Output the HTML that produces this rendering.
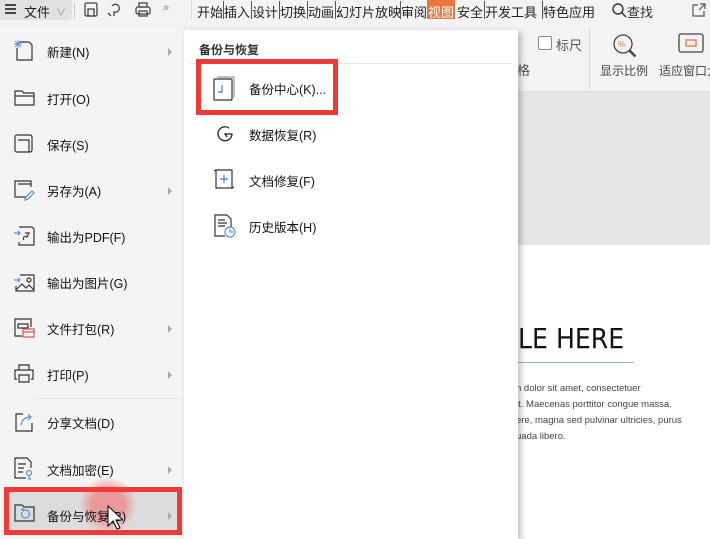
<!DOCTYPE html>
<html><head><meta charset="utf-8"><style>
*{margin:0;padding:0;box-sizing:border-box}
body{width:710px;height:539px;overflow:hidden;position:relative;background:#e6e6e6;font-family:"Liberation Sans","Noto Sans CJK SC",sans-serif;font-size:12px;color:#222}
.abs{position:absolute}
.top{left:0;top:0;width:710px;height:22px;background:#f3f3f3}
.ribbon{left:0;top:22px;width:710px;height:70px;background:#f3f3f3;border-bottom:1px solid #e0e0e0}
.tab{position:absolute;top:2px;font-size:13px;color:#222;white-space:nowrap}
.sep{position:absolute;top:1px;width:1px;height:18px;background:#555}
.slide{left:518px;top:245px;width:192px;height:294px;background:#fff}
.left{left:0;top:26px;width:184px;height:513px;background:#f4f4f4;box-shadow:1px 0 2px rgba(0,0,0,.08)}
.sub{left:184px;top:30px;width:334px;height:509px;background:#fff;box-shadow:3px 2px 6px rgba(0,0,0,.25)}
.item{position:absolute;left:47px;font-size:12.5px;color:#111;white-space:nowrap;margin-top:-2px}
.arr{position:absolute;left:168px;width:0;height:0;border-left:4px solid #aaa;border-top:4px solid transparent;border-bottom:4px solid transparent}
svg{position:absolute}
.red{position:absolute;border:5px solid #f03a3a}
.si{position:absolute;left:249px;font-size:12.5px;color:#111;margin-top:-2px}
</style></head><body>
<div class="abs top"></div>
<div class="abs" style="left:0;top:0;width:72px;height:20px;background:#e2e2e2;border-radius:0 0 4px 0"></div>
<div class="abs" style="left:5px;top:4px;width:11px;height:1.5px;background:#444;box-shadow:0 4px 0 #444,0 8px 0 #444"></div>
<div class="tab" style="left:24px">文件</div>
<div class="tab" style="left:56px;color:#888;font-size:10px;top:4px">∨</div>
<div class="abs" style="left:74px;top:2px;width:1px;height:16px;background:#ccc"></div>
<svg style="left:84px;top:2px" width="70" height="16" fill="none" stroke="#444" stroke-width="1.3"><rect x="1" y="1" width="12" height="13" rx="1.5"/><rect x="4" y="7" width="6" height="7"/><path d="M28 4a4 4 0 1 1 2 6v4M24 11l3 3"/><rect x="52" y="5" width="14" height="7" rx="2"/><rect x="55" y="1" width="8" height="4"/><rect x="55" y="9" width="8" height="5"/></svg>
<div class="tab" style="left:163px;color:#888;font-size:11px">»</div>
<div class="abs" style="left:191px;top:0;width:1px;height:20px;background:#ddd"></div>
<div class="tab" style="left:197px">开始</div><div class="sep" style="left:223px"></div><div class="tab" style="left:224px">插入</div><div class="sep" style="left:251px"></div><div class="tab" style="left:252px">设计</div><div class="sep" style="left:279px"></div><div class="tab" style="left:280px">切换</div><div class="sep" style="left:307px"></div><div class="tab" style="left:308px">动画</div><div class="sep" style="left:335px"></div><div class="tab" style="left:336px">幻灯片放映</div><div class="sep" style="left:400px"></div><div class="tab" style="left:401px">审阅</div>
<div class="abs" style="left:427px;top:0;width:28px;height:19px;background:#e8763f"></div>
<div class="tab" style="left:428px;color:#fff">视图</div><div class="tab" style="left:457px">安全</div><div class="sep" style="left:484px"></div><div class="tab" style="left:485px">开发工具</div><div class="sep" style="left:542px"></div><div class="tab" style="left:543px">特色应用</div>
<svg style="left:611px;top:2px" width="16" height="16" fill="none" stroke="#333" stroke-width="1.4"><circle cx="7" cy="7" r="5"/><path d="M11 11l4 4"/></svg>
<div class="tab" style="left:627px;color:#333">查找</div>
<svg style="left:691px;top:2px" width="16" height="16" fill="none" stroke="#555" stroke-width="1.2"><path d="M7 3H2v11h11V9M9 2h5v5M14 2L8 8"/></svg>
<div class="abs ribbon"></div>
<div class="abs" style="left:538px;top:36px;width:14px;height:14px;border:1px solid #888;border-radius:2px;background:#fff"></div>
<div class="abs" style="left:556px;top:35px;font-size:13px;color:#555">标尺</div>
<div class="abs" style="left:517px;top:60px;font-size:13px;color:#555">格</div>
<div class="abs" style="left:589px;top:28px;width:1px;height:62px;background:#ddd"></div>
<svg style="left:612px;top:33px" width="26" height="26" fill="none" stroke="#444" stroke-width="1.3"><circle cx="11" cy="11" r="9"/><path d="M17.5 17.5l6 6" stroke-width="2.5"/><text x="6" y="14" font-size="8" fill="#e8763f" stroke="none" font-family="Liberation Sans">%</text></svg>
<div class="abs" style="left:600px;top:62px;font-size:12px;color:#444">显示比例</div>
<svg style="left:678px;top:33px" width="32" height="22" fill="none" stroke="#444" stroke-width="1.3"><rect x="1" y="1" width="24" height="18" rx="2"/><rect x="8" y="7" width="10" height="6" stroke="#e8763f"/></svg>
<div class="abs" style="left:659px;top:62px;font-size:12px;color:#444;white-space:nowrap">适应窗口大</div>
<div class="abs slide"></div>
<div class="abs" style="left:518px;top:322px;font-size:28px;color:#111;font-family:'DejaVu Sans Condensed','Liberation Sans',sans-serif;white-space:nowrap">LE HERE</div>
<div class="abs" style="left:518px;top:362px;width:116px;height:1px;background:#8fb4d6"></div>
<div class="abs" style="left:516px;top:381px;font-size:9.5px;color:#444;line-height:16px;white-space:nowrap">n dolor sit amet, consectetuer<br>it. Maecenas porttitor congue massa.<br>ere, magna sed pulvinar ultricies, purus<br>uada libero.</div>
<div class="abs left"></div>
<svg style="left:14px;top:40px" width="20" height="22" fill="none" stroke="#333" stroke-width="1.2"><path d="M5 2h10l3 3v15H3V8"/><path d="M1 1l6 6M7 1L1 7M4 0v8M0 4h8" stroke="#5a8fd8" stroke-width=".9"/></svg>
<div class="item" style="top:44px">新建(N)</div><div class="arr" style="top:48px"></div>
<svg style="left:14px;top:89px" width="22" height="18" fill="none" stroke="#333" stroke-width="1.2"><path d="M1 2h7l2 2h10v12H1z M1 7h19"/></svg>
<div class="item" style="top:91px">打开(O)</div>
<svg style="left:14px;top:134px" width="20" height="20" fill="none" stroke="#333" stroke-width="1.2"><rect x="1" y="1" width="17" height="17" rx="2"/><path d="M4 6h11v12"/></svg>
<div class="item" style="top:137px">保存(S)</div>
<svg style="left:14px;top:180px" width="22" height="22" fill="none" stroke="#333" stroke-width="1.2"><path d="M12 17H1V1h16v6M4 4h13"/><path d="M11 20l1-3 6-6 2 2-6 6z" stroke="#5a8fd8"/></svg>
<div class="item" style="top:183px">另存为(A)</div><div class="arr" style="top:187px"></div>
<svg style="left:14px;top:226px" width="22" height="22" fill="none" stroke="#333" stroke-width="1.2"><path d="M5 1h13l2 2v16H5v-3"/><path d="M10 14a2 2 0 1 1 3-3l2-4h-4" /><path d="M0 7h6M4 5l2 2-2 2" stroke="#5a8fd8"/></svg>
<div class="item" style="top:229px">输出为PDF(F)</div>
<svg style="left:14px;top:272px" width="22" height="22" fill="none" stroke="#333" stroke-width="1.2"><path d="M6 3h14v16H2v-5"/><circle cx="15" cy="8" r="2"/><path d="M2 18l6-6 4 4 3-3 5 5"/><path d="M0 8h6M4 6l2 2-2 2" stroke="#5a8fd8"/></svg>
<div class="item" style="top:275px">输出为图片(G)</div>
<svg style="left:14px;top:318px" width="22" height="22" fill="none" stroke="#333" stroke-width="1.2"><path d="M8 18H1V1h16v8M4 6h10v4H4z"/><rect x="9" y="11" width="11" height="8" stroke="#d9534f"/><path d="M9 14h11" stroke="#d9534f"/></svg>
<div class="item" style="top:321px">文件打包(R)</div><div class="arr" style="top:325px"></div>
<svg style="left:14px;top:364px" width="22" height="20" fill="none" stroke="#333" stroke-width="1.2"><path d="M5 6V1h10v5M3 15H1V6h18v9h-2M5 11h10v7H5z"/></svg>
<div class="item" style="top:367px">打印(P)</div><div class="arr" style="top:371px"></div>
<div class="abs" style="left:35px;top:398px;width:145px;height:1px;background:#e4e4e4"></div>
<svg style="left:14px;top:411px" width="22" height="22" fill="none" stroke="#333" stroke-width="1.2"><path d="M9 3H2v17h16v-8"/><path d="M7 14c1-6 5-8 10-8M14 3l3 3-3 3" stroke="#5a8fd8"/></svg>
<div class="item" style="top:415px">分享文档(D)</div>
<svg style="left:14px;top:457px" width="22" height="24" fill="none" stroke="#333" stroke-width="1.2"><path d="M12 21H1V1h12l4 4v6M4 7h8M4 11h6M4 15h5"/><circle cx="15" cy="16" r="2.5" stroke="#5a8fd8"/><path d="M15 18v4h2" stroke="#5a8fd8"/></svg>
<div class="item" style="top:462px">文档加密(E)</div><div class="arr" style="top:466px"></div>
<div class="abs" style="left:9px;top:491px;width:170px;height:40px;background:#dcdcdc"></div>
<div class="abs" style="left:80px;top:477px;width:56px;height:56px;border-radius:50%;background:radial-gradient(circle,rgba(240,130,130,.75) 40%,rgba(240,150,150,0) 72%)"></div>
<svg style="left:14px;top:503px" width="22" height="20" fill="none" stroke="#333" stroke-width="1.2"><path d="M1 2h7l2 2h10v14H1z"/><path d="M8 9a4 4 0 1 0 3-2h-2M9 5l-1 2 2 1" stroke="#5a8fd8"/></svg>
<div class="item" style="top:508px">备份与恢复(B)</div><div class="arr" style="top:512px"></div>
<svg style="left:107px;top:505px" width="16" height="26"><path d="M1 1v20l5-5 4 8 3-1-4-8h7z" fill="#fff" stroke="#000" stroke-width="1"/></svg>
<div class="red" style="left:4px;top:487px;width:178px;height:48px"></div>
<div class="abs sub"></div>
<div class="abs" style="left:199px;top:41px;font-size:12px;font-weight:bold;color:#333">备份与恢复</div>
<div class="abs" style="left:190px;top:63px;width:323px;height:1px;background:#e8e8e8"></div>
<svg style="left:213px;top:76px" width="24" height="26" fill="none" stroke="#333" stroke-width="1.2"><rect x="1" y="3" width="18" height="21" rx="1"/><path d="M4 1h17v21" stroke="#999"/><path d="M9 9v7H5" stroke="#3c7ee0"/></svg>
<div class="si" style="top:81px">备份中心(K)...</div>
<div class="red" style="left:196px;top:59px;width:142px;height:56px"></div>
<svg style="left:215px;top:124px" width="22" height="20" fill="none" stroke="#222" stroke-width="1.3"><path d="M14 4a7 7 0 1 0 3 6h-7l2 3"/></svg>
<div class="si" style="top:127px">数据恢复(R)</div>
<svg style="left:212px;top:168px" width="24" height="24" fill="none" stroke="#333" stroke-width="1.2"><path d="M4 2h16v18H4z M2 3l2-1M22 19l-2 1"/><path d="M12 7v8M8 11h8" stroke="#3c7ee0"/></svg>
<div class="si" style="top:173px">文档修复(F)</div>
<svg style="left:213px;top:214px" width="26" height="26" fill="none" stroke="#333" stroke-width="1.2"><path d="M12 22H2V1h12l4 4v8M5 6h7M5 9h9M5 12h7"/><circle cx="17" cy="18" r="5" stroke="#5a8fd8" fill="#fff"/><path d="M17 15v3h3" stroke="#5a8fd8"/></svg>
<div class="si" style="top:219px">历史版本(H)</div>
</body></html>
